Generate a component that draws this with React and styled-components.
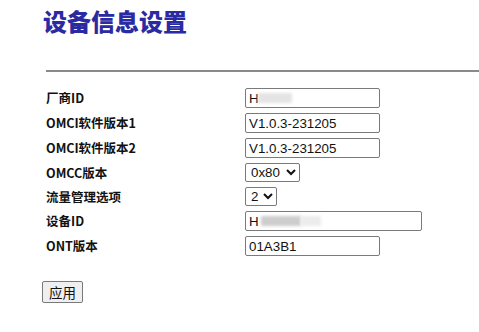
import styled, { createGlobalStyle } from "styled-components";

const GlobalStyle = createGlobalStyle`
  html, body {
    margin: 0;
    padding: 0;
    background: #ffffff;
  }
  body {
    font-family: "Liberation Sans", "Noto Sans CJK SC", sans-serif;
  }
`;

const Page = styled.div`
  width: 479px;
  height: 332px;
  overflow: hidden;
  padding: 6px 0 0 43px;
  box-sizing: border-box;
`;

const Title = styled.h1`
  margin: 0;
  font-family: "Noto Sans CJK SC", sans-serif;
  font-size: 24px;
  line-height: 30px;
  font-weight: 900;
  color: #2a2aa2;
`;

const Rule = styled.div`
  margin: 34px 0 0 3px;
  height: 2px;
  background: #8a8a8a;
`;

const Form = styled.div`
  display: grid;
  grid-template-columns: 199px auto;
  row-gap: 5px;
  align-items: center;
  justify-items: start;
  margin: 16px 0 0 3px;
`;

const Label = styled.div`
  font-family: "Noto Sans CJK SC", sans-serif;
  font-size: 12.5px;
  font-weight: 700;
  color: #111111;
  line-height: 18px;
`;

const Field = styled.div`
  position: relative;
  display: flex;
`;

const TextInput = styled.input`
  box-sizing: border-box;
  width: ${(p) => p.$w}px;
  height: 20px;
  padding: 1px 3px;
  border: 1px solid #7a7a7a;
  border-radius: 2px;
  font-family: "Liberation Sans", "Noto Sans CJK SC", sans-serif;
  font-size: 13.33px;
  color: #111111;
  background: #ffffff;
  outline: none;
`;

const Smudge = styled.span`
  position: absolute;
  left: ${(p) => p.$x}px;
  top: 5px;
  width: ${(p) => p.$w}px;
  height: 10px;
  background: ${(p) => p.$c};
  filter: blur(1.5px);
  pointer-events: none;
`;

const Select = styled.select`
  box-sizing: border-box;
  height: 19px;
  padding: 0 1px;
  border: 1px solid #7a7a7a;
  border-radius: 2px;
  font-family: "Liberation Sans", sans-serif;
  font-size: 13.33px;
  color: #111111;
  background: #ffffff;
`;

const Apply = styled.button`
  margin: 25px 0 0 -1px;
  box-sizing: border-box;
  height: 22px;
  padding: 0 6px;
  border: 1px solid #7a7a7a;
  border-radius: 2px;
  background: #efefef;
  font-family: "Noto Sans CJK SC", sans-serif;
  font-size: 13.5px;
  color: #111111;
  line-height: 18px;
`;

export default function App() {
  return (
    <>
      <GlobalStyle />
      <Page>
        <Title>设备信息设置</Title>
        <Rule />
        <Form>
          <Label>厂商ID</Label>
          <Field>
            <TextInput $w={135} defaultValue="H" />
            <Smudge $x={13} $w={34} $c="#e4e4e4" />
          </Field>

          <Label>OMCI软件版本1</Label>
          <TextInput $w={135} defaultValue="V1.0.3-231205" />

          <Label>OMCI软件版本2</Label>
          <TextInput $w={135} defaultValue="V1.0.3-231205" />

          <Label>OMCC版本</Label>
          <Select defaultValue="0x80">
            <option value="0x80">0x80</option>
            <option value="0xA0">0xA0</option>
          </Select>

          <Label>流量管理选项</Label>
          <Select defaultValue="2">
            <option value="0">0</option>
            <option value="1">1</option>
            <option value="2">2</option>
          </Select>

          <Label>设备ID</Label>
          <Field>
            <TextInput $w={177} defaultValue="H" />
            <Smudge $x={16} $w={40} $c="#cdcdcd" />
            <Smudge $x={56} $w={20} $c="#ececec" />
          </Field>

          <Label>ONT版本</Label>
          <TextInput $w={135} defaultValue="01A3B1" />
        </Form>
        <Apply type="button">应用</Apply>
      </Page>
    </>
  );
}
